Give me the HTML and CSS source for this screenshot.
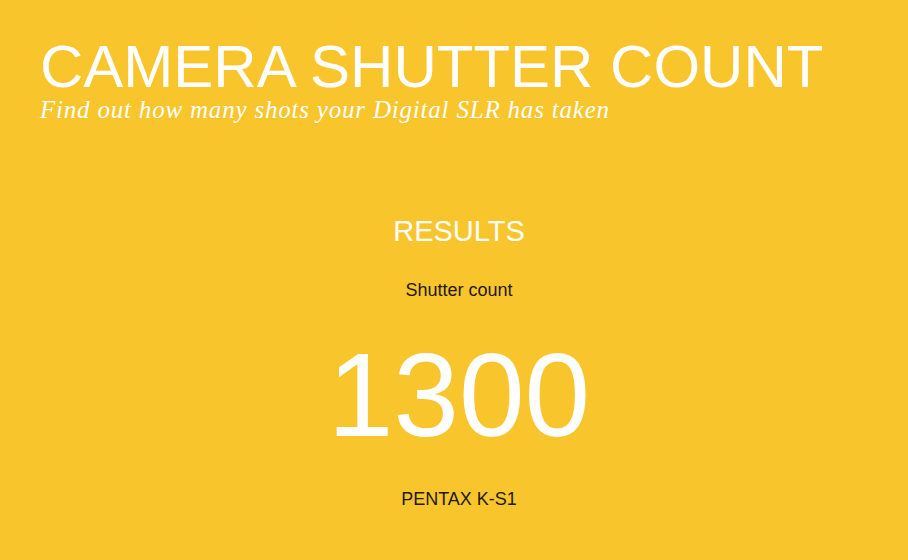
FILE: index.html
```html
<!DOCTYPE html>
<html>
<head>
<meta charset="utf-8">
<link rel="stylesheet" href="styles.css">
</head>
<body>
<header class="masthead">
  <h1 class="title">CAMERA SHUTTER COUNT</h1>
  <p class="tagline">Find out how many shots your Digital SLR has taken</p>
</header>
<main class="results">
  <h2 class="results-heading">RESULTS</h2>
  <p class="label">Shutter count</p>
  <p class="count">1300</p>
  <p class="model">PENTAX K-S1</p>
</main>
</body>
</html>
```

FILE: styles.css
```css
html, body {
  margin: 0;
  padding: 0;
}
body {
  background: #f9c52d;
  font-family: "Liberation Sans", Arial, sans-serif;
  width: 908px;
  height: 560px;
  overflow: hidden;
}
.masthead {
  padding: 37px 0 0 40px;
}
.title {
  margin: 0;
  font-weight: normal;
  font-size: 60px;
  line-height: 60px;
  color: #ffffff;
}
.tagline {
  margin: 1px 0 0 0;
  font-family: "Liberation Serif", Georgia, serif;
  font-style: italic;
  font-size: 25px;
  line-height: 24px;
  letter-spacing: 0.8px;
  color: #ffffff;
}
.results {
  display: flex;
  flex-direction: column;
  align-items: center;
  padding: 95px 0 0 10px;
}
.results-heading {
  margin: 0;
  font-weight: normal;
  font-size: 29px;
  line-height: 29px;
  color: #ffffff;
}
.label {
  margin: 35px 0 0 0;
  font-size: 18px;
  line-height: 18px;
  color: #1e1a10;
}
.count {
  margin: 37px 0 0 0;
  font-size: 118px;
  line-height: 118px;
  color: #ffffff;
}
.model {
  margin: 36px 0 0 0;
  font-size: 18px;
  line-height: 18px;
  color: #1e1a10;
}
```
